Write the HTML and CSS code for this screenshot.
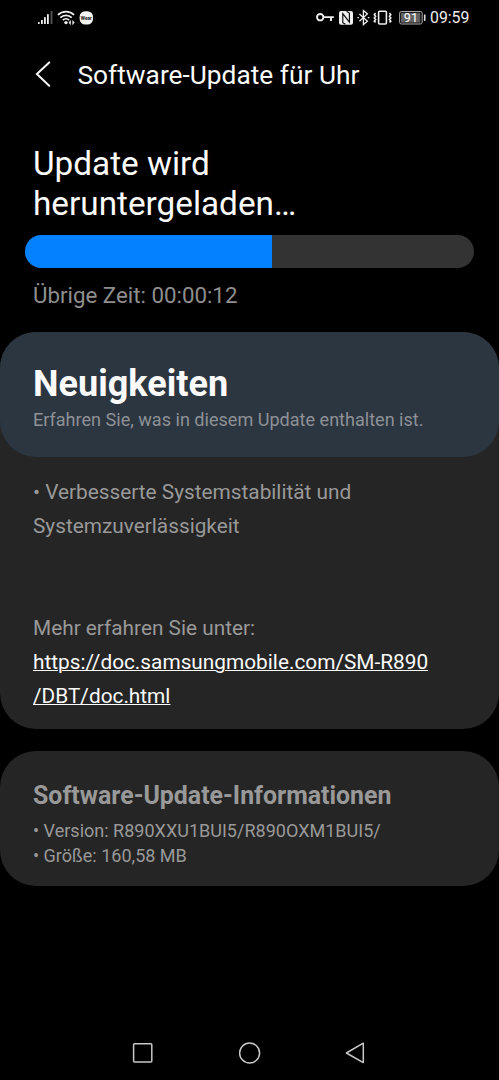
FILE: index.html
```
<!DOCTYPE html>
<html lang="de">
<head>
<meta charset="utf-8">
<meta name="viewport" content="width=device-width, initial-scale=1">
<title>Software-Update für Uhr</title>
<link rel="stylesheet" href="styles.css">
</head>
<body>
<div class="statusbar">
  <svg class="status-icons" width="56" height="18" viewBox="0 0 56 18">
    <g fill="#f0f0f0">
      <rect x="0" y="13" width="1.6" height="2"/>
      <rect x="3" y="11" width="1.8" height="4"/>
      <rect x="6" y="8.2" width="1.8" height="6.8"/>
      <rect x="9" y="5.2" width="1.8" height="9.8"/>
      <rect x="12.6" y="2" width="1.8" height="13" opacity=".35"/>
      <circle cx="28" cy="13.6" r="1.7"/>
      <path d="M30.6 13.6l2.2-2.6v5.2zM36.6 13.6l-2.2-2.6v5.2z"/>
    </g>
    <g fill="none" stroke="#f0f0f0" stroke-width="1.7">
      <path d="M19.9 5.9C24.5 1.4 31.5 1.4 36.1 5.9"/>
      <path d="M22.3 8.6C25.5 5.5 30.5 5.5 33.7 8.6"/>
      <path d="M24.8 11.1C26.6 9.4 29.4 9.4 31.2 11.1"/>
    </g>
    <rect x="41.6" y="2.2" width="13.4" height="13.4" rx="5.6" fill="#f4f4f4"/>
    <text class="wear" x="48.3" y="10.8" text-anchor="middle" textLength="11" lengthAdjust="spacingAndGlyphs">Wear</text>
  </svg>
  <div class="status-right">
    <svg width="112" height="18" viewBox="0 0 112 18">
      <g fill="none" stroke="#eee" stroke-width="1.9">
        <circle cx="4.2" cy="8.2" r="3.2"/>
        <path d="M7.4 8.1h10.4M15 8.1v3.8"/>
      </g>
      <rect x="23" y="1.9" width="14" height="13.8" rx="2" fill="#eee"/>
      <path d="M29.4 15.2l-2.6-1.6V4.6l6.6 8.6V4l-2.8-1.8" fill="none" stroke="#000" stroke-width="1.1"/>
      <path d="M43.4 4.9l8 7.4-4 3.3V1.6l4 3.3-8 7.4M41.4 8.6h1.6M51.8 8.6h1.6" fill="none" stroke="#eee" stroke-width="1.3"/>
      <g fill="none" stroke="#eee" stroke-width="1.6">
        <rect x="62.6" y="2.2" width="7.8" height="12.8" rx="1"/>
        <path d="M59.6 4.1l-1.3 1.6 1.3 1.6-1.3 1.6 1.3 1.6-1.3 1.6 1.3 1.2M73.5 4.1l1.3 1.6-1.3 1.6 1.3 1.6-1.3 1.6 1.3 1.6-1.3 1.2"/>
      </g>
      <rect x="83.6" y="2.5" width="22.6" height="12.5" rx="1.8" fill="#111" stroke="#aaa"/>
      <rect x="85" y="3.9" width="19.2" height="9.7" fill="#626262"/>
      <path d="M108.7 5.5v6.4" stroke="#ddd" stroke-width="1.6"/>
      <text class="battery" x="94.9" y="13" text-anchor="middle">91</text>
    </svg>
    <span class="clock">09:59</span>
  </div>
</div>
<header class="appbar">
  <svg width="16" height="28" viewBox="0 0 16 28"><path d="M14.2 1.4L1.9 13l12.3 11.7" fill="none" stroke="#f5f5f5" stroke-width="2" stroke-linecap="round"/></svg>
  <h1 class="title">Software-Update für Uhr</h1>
</header>
<main>
  <section class="download">
    <h2 class="headline">Update wird<br>heruntergeladen…</h2>
    <div class="progress"><div class="progress-fill" style="width:55%"></div></div>
    <p class="remaining">Übrige Zeit: 00:00:12</p>
  </section>
  <section class="card news">
    <div class="news-head">
      <h2 class="news-title">Neuigkeiten</h2>
      <p class="news-sub">Erfahren Sie, was in diesem Update enthalten ist.</p>
    </div>
    <div class="news-body">
      <p>• Verbesserte Systemstabilität und<br>Systemzuverlässigkeit</p>
      <p class="more">Mehr erfahren Sie unter:<br><a class="link" href="#">https://doc.samsungmobile.com/SM-R890<br>/DBT/doc.html</a></p>
    </div>
  </section>
  <section class="card info">
    <h2 class="info-title">Software-Update-Informationen</h2>
    <p class="info-line">• Version: R890XXU1BUI5/R890OXM1BUI5/</p>
    <p class="info-line">• Größe: 160,58 MB</p>
  </section>
</main>
<nav class="navbar">
  <svg width="22" height="22" viewBox="0 0 22 22"><rect x="1.6" y="1.8" width="18.2" height="18.2" rx="1"/></svg>
  <svg width="22" height="22" viewBox="0 0 22 22"><circle cx="10.6" cy="11" r="10"/></svg>
  <svg width="22" height="22" viewBox="0 0 22 22"><path d="M18.3 1.2v19.4L1.4 11z"/></svg>
</nav>
</body>
</html>
```
FILE: styles.css
```
* { box-sizing: border-box; }
body {
  margin: 0;
  height: 1080px;
  display: flex;
  flex-direction: column;
  background: #000;
  color: #fafafa;
  font-family: Roboto, "Liberation Sans", sans-serif;
  overflow: hidden;
}
h1, h2, p { margin: 0; font-weight: 400; white-space: nowrap; }
svg { display: block; flex: none; }
.statusbar {
  height: 36px;
  padding: 0 30px 0 38px;
  display: flex;
  justify-content: space-between;
  align-items: center;
}
.wear { font-size: 4.8px; font-weight: 700; fill: #111; }
.battery { font-size: 12.5px; fill: #fff; }
.status-right { display: flex; align-items: center; gap: 2px; }
.clock { font-size: 15.8px; line-height: 18px; color: #eee; width: 39px; white-space: nowrap; }
.appbar {
  height: 78px;
  padding-left: 35px;
  display: flex;
  align-items: center;
  gap: 26.5px;
}
.title { font-size: 26.3px; line-height: 30px; }
.download { height: 217.5px; padding: 30px 25px 0; }
.headline { padding-left: 8px; font-size: 33.3px; line-height: 39.5px; }
.progress {
  margin-top: 12px;
  height: 33px;
  border-radius: 17px;
  background: #333;
  overflow: hidden;
}
.progress-fill { height: 100%; background: #0381fe; }
.remaining { padding: 14px 0 0 8px; font-size: 22.3px; line-height: 27px; color: #8e8e8e; }
.card { background: #252525; border-radius: 36px; color: #999; }
.news { height: 397px; }
.news-head { height: 125.5px; padding: 32px 33px 0; border-radius: 36px; background: #2b3641; }
.news-title { font-size: 36.1px; line-height: 41px; font-weight: 700; color: #fafafa; }
.news-sub { margin-top: 3.2px; font-size: 18.07px; line-height: 24px; color: #8e9196; }
.news-body { padding: 17.6px 33px 0; font-size: 20.8px; line-height: 34.2px; }
.more { margin-top: 67.8px; }
.link { color: #fafafa; text-decoration-thickness: 1px; }
.info { margin-top: 22.5px; height: 135px; padding: 30px 33px 0; }
.info-title { font-size: 24.9px; line-height: 30px; margin-bottom: 8px; font-weight: 700; }
.info-line { font-size: 18.05px; line-height: 24.5px; }
.navbar {
  margin-top: auto;
  height: 55px;
  padding: 0 132px;
  display: flex;
  align-items: center;
  justify-content: space-between;
  fill: none;
  stroke: #c8c8c8;
  stroke-width: 1.5;
  stroke-linejoin: round;
}
```
